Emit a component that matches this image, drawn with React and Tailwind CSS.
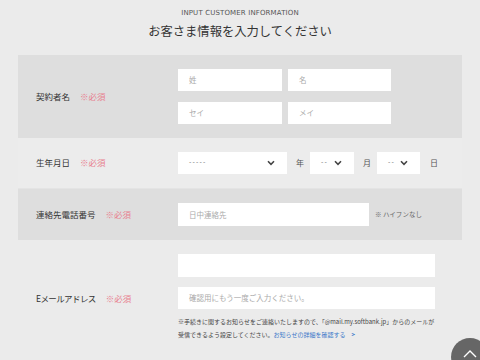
const jp = { fontFamily: '"Noto Sans CJK JP", "Noto Sans", sans-serif' };

function Required() {
  return <span className="ml-[10px] text-[8.5px] text-[#e8808f]">※必須</span>;
}

function Field({ placeholder, className }) {
  return (
    <div className={`flex h-[22px] items-center bg-white pl-[11px] text-[7.5px] text-[#aaaaaa] ${className}`}>
      {placeholder}
    </div>
  );
}

function Chevron() {
  return (
    <svg width="8" height="6" viewBox="0 0 8 6" fill="none">
      <path d="M1 1.3 4 4.3 7 1.3" stroke="#444" strokeWidth="1.6" />
    </svg>
  );
}

function Select({ className, children }) {
  return (
    <div className={`flex h-[22px] items-center justify-between bg-white pl-[11px] pr-[12px] text-[7px] text-[#888888] ${className}`}>
      <span className="tracking-[1.2px]" style={{ fontFamily: '"Liberation Sans", sans-serif' }}>{children}</span>
      <Chevron />
    </div>
  );
}

function Label({ children }) {
  return (
    <div className="flex w-[160px] shrink-0 items-center pl-[18px] text-[8.5px] text-[#333333]">
      <span>{children}</span>
      <Required />
    </div>
  );
}

export default function App() {
  return (
    <div className="h-[360px] w-[480px] overflow-hidden bg-[#ebebeb] px-[18px]" style={jp}>
      <div className="pt-[9px] text-center">
        <p className="text-[7px] leading-[8px] tracking-[0.02em] text-[#555555]" style={{ fontFamily: '"DejaVu Sans", sans-serif' }}>
          INPUT CUSTOMER INFORMATION
        </p>
        <h1 className="mt-[6px] text-[12.3px] leading-[16px] text-[#333333]">お客さま情報を入力してください</h1>
      </div>

      <div className="mt-[16px] flex h-[83px] items-center bg-[#dedede]">
        <Label>契約者名</Label>
        <div className="flex flex-col gap-[11px]">
          <div className="flex gap-[6px]">
            <Field placeholder="姓" className="w-[104px]" />
            <Field placeholder="名" className="w-[103px]" />
          </div>
          <div className="flex gap-[6px]">
            <Field placeholder="セイ" className="w-[104px]" />
            <Field placeholder="メイ" className="w-[103px]" />
          </div>
        </div>
      </div>

      <div className="flex h-[51px] items-center border-b border-[#e4e4e4] bg-[#ececec] pb-px">
        <Label>生年月日</Label>
        <div className="flex items-center text-[8px] text-[#555555]">
          <Select className="w-[109px]">-----</Select>
          <span className="ml-[9px] mr-[6px]">年</span>
          <Select className="w-[44px] pl-[10px] pr-[9px]">--</Select>
          <span className="ml-[9px] mr-[6px]">月</span>
          <Select className="w-[43px] pl-[10px] pr-[9px]">--</Select>
          <span className="ml-[10px]">日</span>
        </div>
      </div>

      <div className="flex h-[51px] items-center bg-[#dedede]">
        <Label>連絡先電話番号</Label>
        <Field placeholder="日中連絡先" className="h-[23px] w-[191px]" />
        <span className="ml-[6px] text-[6.5px] text-[#666666]">※ ハイフンなし</span>
      </div>

      <div className="flex pt-[14px]">
        <div className="flex w-[160px] shrink-0 items-start pl-[18px] pt-[38px] text-[8.5px] text-[#333333]">
          <span className="tracking-[-0.6px]">Eメールアドレス</span>
          <Required />
        </div>
        <div className="flex w-[257px] flex-col">
          <Field placeholder="" className="h-[23px]" />
          <Field placeholder="確認用にもう一度ご入力ください。" className="mt-[10px] h-[22px]" />
          <p className="mt-[6px] whitespace-nowrap text-[6px] leading-[13px] text-[#444444]">
            ※手続きに関するお知らせをご連絡いたしますので、「@mail.my.softbank.jp」からのメールが
            <br />
            受信できるよう設定してください。
            <span className="text-[#3a78c9]">お知らせの詳細を確認する</span>
            <span className="ml-[6px] font-bold text-[#3a78c9]">&gt;</span>
          </p>
        </div>
      </div>

      <div className="absolute left-[451px] top-[338px] flex h-[38px] w-[38px] items-start justify-center rounded-full bg-[#666666] pt-[12px]">
        <svg width="14" height="8" viewBox="0 0 14 8" fill="none">
          <path d="M1 7 7 1l6 6" stroke="#fff" strokeWidth="1.4" />
        </svg>
      </div>
    </div>
  );
}
